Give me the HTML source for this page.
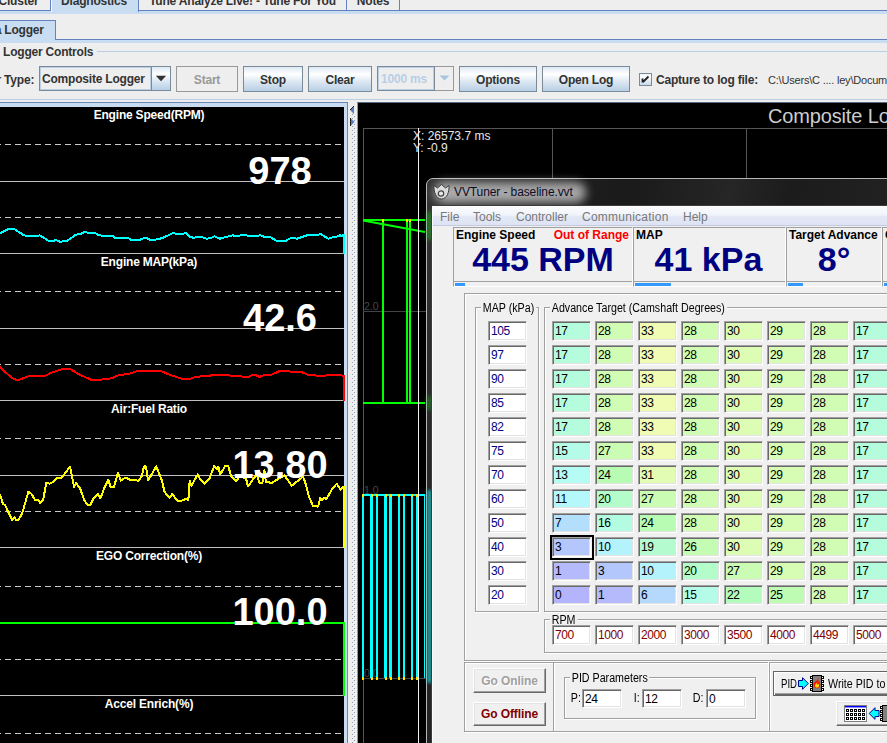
<!DOCTYPE html>
<html><head><meta charset="utf-8"><title>VVTuner</title>
<style>
html,body{margin:0;padding:0}
body{width:887px;height:743px;overflow:hidden;position:relative;background:#eeeeee;font-family:"Liberation Sans",sans-serif;font-size:12px;color:#333}
.a{position:absolute;box-sizing:border-box}
.jb{font-weight:bold;font-size:12px;letter-spacing:-0.2px;white-space:nowrap;color:#333}
.btn{border:1px solid #7a8a99;background:linear-gradient(#dde8f3 0%,#ffffff 30%,#dde8f3 60%,#b8cfe5 100%);text-align:center;line-height:26px;height:26px;top:66px}
.tab{border:1px solid #6382bf;border-top:none;background:#eee;top:-10px;height:21px;text-align:center}
.ttl{color:#fff;font-weight:bold;font-size:12px;letter-spacing:-0.2px;white-space:nowrap;text-align:center;left:49px;width:200px}
.big{color:#fff;font-weight:bold;font-size:38px;white-space:nowrap;text-align:center;left:180px;width:200px;line-height:38px}
.w{font-size:12px;color:#000;white-space:nowrap}
.nr{transform:scaleX(0.89);transform-origin:0 0;white-space:nowrap;color:#000;font-size:12px;line-height:14px;background:#f0f0f0;padding:0 2px}
.in{border:1px solid;border-color:#a0a0a0 #fff #fff #a0a0a0;box-shadow:inset 1px 1px 0 #696969,inset -1px -1px 0 #e3e3e3;background:#fff;height:20px;line-height:19px;padding-left:2px;font-size:12px;letter-spacing:-0.4px;white-space:nowrap;overflow:hidden}
.c{width:37px}
.grp{border:1px solid #a0a0a0;box-shadow:1px 1px 0 #fff, inset 1px 1px 0 #fff}
.pnl{border:1px solid #a0a0a0;box-shadow:1px 1px 0 #fff, inset 1px 1px 0 #fff}
.wb{border:1px solid;border-color:#fff #696969 #696969 #fff;box-shadow:inset -1px -1px 0 #a0a0a0, inset 1px 1px 0 #e3e3e3;background:#f0f0f0}
.g{border:1px solid;border-color:#a0a0a0 #fff #fff #a0a0a0;top:227px;height:60px}
.gl{font-weight:bold;font-size:12px;color:#000;white-space:nowrap;top:0px;line-height:14px}
.gv{font-weight:bold;font-size:34px;color:#000080;white-space:nowrap;text-align:center;left:0;right:0;top:12px;line-height:38px}
.mn{top:4px;color:#787878;font-size:12px;white-space:nowrap;line-height:14px}
</style></head><body>

<div class="a" style="left:0;top:10px;width:887px;height:1px;background:#6382bf"></div>
<div class="a" style="left:0;top:11px;width:887px;height:3px;background:#c8ddf2"></div>
<div class="a tab jb" style="left:-30px;width:81px"><span style="position:absolute;left:16px;right:0;top:4px;line-height:14px">Cluster</span></div>
<div class="a tab jb" style="left:51px;width:88px;background:#c8ddf2;height:22px;border-bottom:none;border-left-color:#f4f8fc"><span style="position:absolute;left:0;right:2px;top:4px;line-height:14px">Diagnostics</span></div>
<div class="a tab jb" style="left:138px;width:209px"><span style="position:absolute;left:0;right:0;top:4px;line-height:14px">Tune Analyze Live! - Tune For You</span></div>
<div class="a tab jb" style="left:346px;width:54px"><span style="position:absolute;left:0;right:0;top:4px;line-height:14px">Notes</span></div>
<div class="a" style="left:0;top:39px;width:887px;height:1px;background:#6382bf"></div>
<div class="a" style="left:0;top:40px;width:887px;height:3px;background:#c8ddf2"></div>
<div class="a jb" style="left:-20px;top:20px;width:76px;height:20px;border:1px solid #6382bf;border-bottom:none;background:#c8ddf2;line-height:19px"><span style="position:absolute;left:-5px;top:0">Data Logger</span></div>
<div class="a" style="left:0;top:51px;width:887px;height:1px;background:#b8cfe5"></div>
<div class="a jb" style="left:-1px;top:45px;background:#eee;padding:0 4px 0 4px;line-height:15px">Logger Controls</div>
<div class="a" style="left:0;top:99px;width:887px;height:1px;background:#b8cfe5"></div>
<div class="a jb" style="left:-10px;top:73px;line-height:15px">er Type:</div>
<div class="a" style="left:39px;top:66px;width:132px;height:25px;border:1px solid #7a8a99;background:linear-gradient(#dde8f3 0%,#ffffff 30%,#dde8f3 60%,#b8cfe5 100%)"></div>
<div class="a" style="left:40px;top:67px;width:111px;height:23px;border:1px solid #b8cfe5;background:#eee"></div>
<div class="a jb" style="left:42px;top:72px;line-height:15px">Composite Logger</div>
<div class="a" style="left:151px;top:67px;width:1px;height:23px;background:#7a8a99"></div>
<svg class="a" style="left:155px;top:75px" width="12" height="7"><path d="M0.800 0.800h10.400l-5.200 5.400z" fill="#333"/></svg>
<div class="a jb" style="left:176px;top:66px;width:62px;height:26px;border:1px solid #999;text-align:center;line-height:26px;color:#999">Start</div>
<div class="a jb btn" style="left:243px;width:60px">Stop</div>
<div class="a jb btn" style="left:308px;width:64px">Clear</div>
<div class="a" style="left:434px;top:66px;width:20px;height:25px;border:1px solid #999;border-left:none"></div>
<div class="a" style="left:377px;top:66px;width:58px;height:25px;border:1px solid #7a8a99;box-shadow:inset 0 0 0 1px #b8cfe5"></div>
<div class="a jb" style="left:381px;top:72px;line-height:15px;color:#b8cfe5">1000 ms</div>
<svg class="a" style="left:439px;top:75px" width="12" height="7"><path d="M0.5 0.5h10l-5 5z" fill="#a9c4e0"/></svg>
<div class="a jb btn" style="left:459px;width:78px">Options</div>
<div class="a jb btn" style="left:542px;width:88px">Open Log</div>
<div class="a" style="left:639px;top:73px;width:13px;height:13px;border:1px solid #7a8a99;background:linear-gradient(#eef3f9,#fff 25%,#c6d8ec)"></div>
<svg class="a" style="left:639px;top:73px" width="13" height="13"><path d="M3.5 5.500v4M4 9l5.500-5.500" stroke="#222" stroke-width="1.800" fill="none"/></svg>
<div class="a jb" style="left:656px;top:73px;line-height:15px">Capture to log file:</div>
<div class="a" style="left:768px;top:73px;line-height:14px;font-size:11px;letter-spacing:-0.2px;white-space:nowrap;color:#333">C:\Users\C .... ley\Documents\TunerStudioProjects</div>
<div class="a" style="left:-5px;top:102px;width:353px;height:700px;border:1px solid #6a86b4;background:#c8ddf2"></div>
<div class="a" style="left:0;top:107px;width:344px;height:640px;background:#000"></div>
<svg class="a" style="left:0;top:0" width="345" height="743" viewBox="0 0 345 743" shape-rendering="crispEdges"><line x1="-5" y1="144.5" x2="344" y2="144.5" stroke="#c8c8c8" stroke-width="1" stroke-dasharray="6 4"/><line x1="0" y1="181.5" x2="344" y2="181.5" stroke="#c0c0c0" stroke-width="1"/><line x1="-5" y1="217.5" x2="344" y2="217.5" stroke="#c8c8c8" stroke-width="1" stroke-dasharray="6 4"/><line x1="0" y1="253.5" x2="344" y2="253.5" stroke="#c0c0c0" stroke-width="1"/><line x1="-5" y1="291.5" x2="344" y2="291.5" stroke="#c8c8c8" stroke-width="1" stroke-dasharray="6 4"/><line x1="0" y1="328.5" x2="344" y2="328.5" stroke="#c0c0c0" stroke-width="1"/><line x1="-5" y1="364.5" x2="344" y2="364.5" stroke="#c8c8c8" stroke-width="1" stroke-dasharray="6 4"/><line x1="0" y1="400.5" x2="344" y2="400.5" stroke="#c0c0c0" stroke-width="1"/><line x1="-5" y1="438.5" x2="344" y2="438.5" stroke="#c8c8c8" stroke-width="1" stroke-dasharray="6 4"/><line x1="0" y1="475.5" x2="344" y2="475.5" stroke="#c0c0c0" stroke-width="1"/><line x1="-5" y1="511.5" x2="344" y2="511.5" stroke="#c8c8c8" stroke-width="1" stroke-dasharray="6 4"/><line x1="0" y1="547.5" x2="344" y2="547.5" stroke="#c0c0c0" stroke-width="1"/><line x1="-5" y1="586.5" x2="344" y2="586.5" stroke="#c8c8c8" stroke-width="1" stroke-dasharray="6 4"/><line x1="-5" y1="659.5" x2="344" y2="659.5" stroke="#c8c8c8" stroke-width="1" stroke-dasharray="6 4"/><line x1="0" y1="695.5" x2="344" y2="695.5" stroke="#c0c0c0" stroke-width="1"/><line x1="-5" y1="733.5" x2="344" y2="733.5" stroke="#c8c8c8" stroke-width="1" stroke-dasharray="6 4"/><line x1="0" y1="770.5" x2="344" y2="770.5" stroke="#c0c0c0" stroke-width="1"/><line x1="-5" y1="800.5" x2="344" y2="800.5" stroke="#c8c8c8" stroke-width="1" stroke-dasharray="6 4"/><line x1="0" y1="840.5" x2="344" y2="840.5" stroke="#c0c0c0" stroke-width="1"/><polyline points="0.0,233.3 9.0,228.8 14.0,228.8 24.0,235.3 27.4,236.3 37.5,236.3 39.6,235.3 48.7,240.8 53.8,240.8 55.8,239.8 59.9,241.8 67.0,240.8 76.0,234.7 81.0,233.9 85.0,231.8 88.0,232.9 95.0,232.9 98.0,234.7 101.5,235.7 112.6,235.7 114.6,237.7 127.8,237.7 132.0,240.4 139.0,240.4 142.0,238.7 146.0,237.7 150.0,239.8 158.0,239.4 164.0,237.3 172.5,233.3 180.0,233.9 186.2,233.3 190.3,236.9 193.3,237.7 200.4,236.7 206.5,238.7 210.6,238.3 214.6,236.3 219.7,238.7 228.8,236.3 232.9,235.3 236.0,236.3 244.0,234.7 248.0,235.9 257.3,235.9 260.3,235.3 265.4,237.3 269.4,236.7 276.5,240.8 285.7,240.8 291.8,237.7 296.8,238.7 309.0,234.7 312.0,235.3 321.2,234.3 328.3,238.7 332.3,237.3 338.4,236.3 340.5,234.9 341.5,236.3 343.0,234.7 344,235 344,254" fill="none" stroke="#00ffff" stroke-width="2" stroke-linejoin="round"/><polyline points="0.0,366.8 4.0,371.2 14.2,379.4 19.3,379.8 28.4,376.3 44.6,376.3 50.7,372.9 63.0,368.8 70.0,368.8 79.0,374.3 91.3,379.8 99.4,379.8 111.6,378.3 119.7,374.7 127.8,374.3 139.0,370.6 160.3,370.6 168.4,374.3 174.5,376.3 176.0,376.9 182.2,378.9 189.3,378.9 196.4,376.9 206.5,375.9 218.7,374.7 228.8,374.7 230.9,375.9 240.0,375.9 243.0,376.9 249.0,376.9 251.2,375.3 256.2,375.3 259.3,376.9 265.4,374.7 271.5,374.7 280.6,370.6 288.7,370.6 290.7,371.8 300.9,371.8 308.0,374.9 315.0,374.9 317.0,375.9 325.2,375.9 327.3,374.7 340.5,374.7 343.0,375.9 344,376 344,401" fill="none" stroke="#ff0000" stroke-width="2" stroke-linejoin="round"/><polyline points="0.0,494.4 3.0,504.0 5.0,505.0 12.2,520.2 14.6,517.1 16.2,520.2 18.7,519.7 22.3,513.0 28.4,491.7 31.5,493.8 35.0,499.9 38.6,500.5 40.0,502.9 43.2,499.5 46.3,483.0 49.7,483.6 53.8,481.6 56.8,477.5 61.9,477.5 70.0,466.8 74.0,486.7 76.0,483.0 80.2,488.7 84.2,499.9 87.7,505.3 90.3,505.3 93.8,497.8 97.8,493.8 100.4,498.4 104.5,487.7 108.2,479.6 110.6,486.7 114.0,487.1 118.0,472.5 120.7,480.6 125.8,477.5 130.9,480.2 139.0,480.6 142.0,475.5 144.0,466.4 146.0,466.4 148.1,480.6 156.3,466.4 162.3,481.6 164.4,491.7 169.4,497.8 172.4,493.8 177.1,500.5 181.2,500.9 186.2,498.8 188.3,500.5 189.7,480.6 191.3,485.7 197.8,474.5 200.4,479.6 204.5,483.6 209.6,478.6 214.2,466.0 217.0,469.4 218.3,466.8 220.3,474.5 225.2,466.0 228.2,466.0 230.9,475.5 236.0,481.6 239.0,476.9 243.0,477.5 246.0,478.6 248.0,486.3 255.2,476.5 256.2,472.5 259.3,482.6 262.3,483.0 264.4,470.4 265.8,481.6 271.5,483.0 280.6,477.5 284.6,475.5 291.8,485.7 302.9,476.9 305.0,481.6 309.0,496.8 313.0,506.0 318.1,506.6 320.2,497.8 322.2,499.9 324.2,497.8 326.3,499.3 332.3,488.7 336.8,483.6 340.5,489.7 343.0,487.1 344,487 344,548" fill="none" stroke="#ffff00" stroke-width="2" stroke-linejoin="round"/><polyline points="0,623 344,623 344,696" fill="none" stroke="#00ff00" stroke-width="2"/></svg>
<div class="a ttl" style="top:107.5px;line-height:14px">Engine Speed(RPM)</div>
<div class="a big" style="top:151.5px">978</div>
<div class="a ttl" style="top:254.8px;line-height:14px">Engine MAP(kPa)</div>
<div class="a big" style="top:298.8px">42.6</div>
<div class="a ttl" style="top:402.0px;line-height:14px">Air:Fuel Ratio</div>
<div class="a big" style="top:446.0px">13.80</div>
<div class="a ttl" style="top:549.2px;line-height:14px">EGO Correction(%)</div>
<div class="a big" style="top:593.2px">100.0</div>
<div class="a ttl" style="top:696.5px;line-height:14px">Accel Enrich(%)</div>
<div class="a" style="left:348px;top:102px;width:10px;height:641px;background:#eee"></div>
<svg class="a" style="left:352px;top:114px" width="5" height="629" shape-rendering="crispEdges"><defs><pattern id="dp" width="5" height="4" patternUnits="userSpaceOnUse"><rect x="0" y="0" width="1" height="1" fill="#8e9db0"/><rect x="1" y="1" width="1" height="1" fill="#fff"/><rect x="2" y="2" width="1" height="1" fill="#8e9db0"/><rect x="3" y="3" width="1" height="1" fill="#fff"/></pattern></defs><rect width="5" height="629" fill="url(#dp)"/></svg>
<svg class="a" style="left:348px;top:104px" width="10" height="24"><path d="M6 2v8l-4-4z" fill="#5b7bc8"/><path d="M6 2l-4 4" stroke="#222" stroke-width="1" fill="none"/><path d="M2.5 14v8l4-4z" fill="#5b7bc8"/><path d="M2.500 14v8" stroke="#222" stroke-width="1"/></svg>
<div class="a" style="left:357px;top:102px;width:530px;height:641px;background:#000;border-left:1px solid #8c9cb0;border-top:1px solid #5a6a80"></div>
<div class="a" style="left:768px;top:105px;font-size:20px;line-height:22px;color:#cdcdcd;white-space:nowrap;letter-spacing:-0.15px">Composite Logger</div>
<div class="a" style="left:364px;top:301px;font-size:10.5px;line-height:10px;color:#464646;white-space:nowrap">2.0</div>
<div class="a" style="left:364px;top:485px;font-size:10.5px;line-height:10px;color:#464646;white-space:nowrap">1.0</div>
<div class="a" style="left:364px;top:668px;font-size:10.5px;line-height:10px;color:#464646;white-space:nowrap">0.0</div>
<svg class="a" style="left:357px;top:102px" width="530" height="641" viewBox="357 102 530 641" shape-rendering="crispEdges"><path d="M363.5 743V128.5H887" fill="none" stroke="#555" stroke-width="1"/><line x1="552.5" y1="128" x2="552.5" y2="743" stroke="#555"/><line x1="746.5" y1="128" x2="746.5" y2="743" stroke="#555"/><line x1="363" y1="311.5" x2="887" y2="311.5" stroke="#444"/><line x1="363" y1="495.5" x2="887" y2="495.5" stroke="#444"/><line x1="363" y1="678.5" x2="887" y2="678.5" stroke="#444"/><rect x="363" y="219" width="62" height="2" fill="#00ff00"/><rect x="363" y="402" width="62" height="2" fill="#00ff00"/><line x1="363" y1="220.5" x2="425" y2="232" stroke="#00ff00" stroke-width="2" shape-rendering="auto"/><rect x="382" y="220" width="2" height="183" fill="#00ff00"/><rect x="382" y="219" width="2" height="3" fill="#ffe800"/><rect x="406" y="220" width="2" height="183" fill="#00ff00"/><rect x="406" y="219" width="2" height="3" fill="#ffe800"/><rect x="409" y="220" width="2" height="183" fill="#00ff00"/><rect x="409" y="219" width="2" height="3" fill="#ffe800"/><rect x="362" y="494" width="63" height="2" fill="#00ffff"/><rect x="362" y="495" width="2" height="183" fill="#00ffff"/><rect x="362" y="494" width="2" height="3" fill="#ffe800"/><rect x="362" y="677" width="2" height="3" fill="#ffe800"/><rect x="370" y="495" width="3" height="183" fill="#00ffff"/><rect x="371" y="494" width="2" height="3" fill="#ffe800"/><rect x="371" y="677" width="2" height="3" fill="#ffe800"/><rect x="376" y="495" width="2" height="183" fill="#00ffff"/><rect x="376" y="494" width="2" height="3" fill="#ffe800"/><rect x="376" y="677" width="2" height="3" fill="#ffe800"/><rect x="384" y="495" width="3" height="183" fill="#00ffff"/><rect x="385" y="494" width="2" height="3" fill="#ffe800"/><rect x="385" y="677" width="2" height="3" fill="#ffe800"/><rect x="389" y="495" width="3" height="183" fill="#00ffff"/><rect x="390" y="494" width="2" height="3" fill="#ffe800"/><rect x="390" y="677" width="2" height="3" fill="#ffe800"/><rect x="398" y="495" width="2" height="183" fill="#00ffff"/><rect x="398" y="494" width="2" height="3" fill="#ffe800"/><rect x="398" y="677" width="2" height="3" fill="#ffe800"/><rect x="403" y="495" width="2" height="183" fill="#00ffff"/><rect x="403" y="494" width="2" height="3" fill="#ffe800"/><rect x="403" y="677" width="2" height="3" fill="#ffe800"/><rect x="411" y="495" width="2" height="183" fill="#00ffff"/><rect x="411" y="494" width="2" height="3" fill="#ffe800"/><rect x="411" y="677" width="2" height="3" fill="#ffe800"/><rect x="416" y="495" width="2" height="183" fill="#00ffff"/><rect x="416" y="494" width="2" height="3" fill="#ffe800"/><rect x="416" y="677" width="2" height="3" fill="#ffe800"/><rect x="424" y="495" width="1" height="183" fill="#00ffff"/><line x1="418.5" y1="128" x2="418.5" y2="743" stroke="#f0f0f0"/></svg>
<div class="a" style="left:413px;top:130px;font-size:12px;line-height:12px;color:#e8e8e8;white-space:nowrap">X: 26573.7 ms<br>Y: -0.9</div>
<div class="a" style="left:426px;top:178px;width:480px;height:600px;border:1px solid #b4b8bc;border-radius:7px 0 0 0;background:linear-gradient(100deg,#343434 0,#262626 60px,#1a1a1a 200px,#262626 300px,#1c1c1c 360px,#222 480px)"></div>
<div class="a" style="left:427px;top:212px;width:5px;height:28px;background:rgba(40,200,40,0.55);filter:blur(2px)"></div>
<div class="a" style="left:427px;top:396px;width:5px;height:14px;background:rgba(40,200,40,0.45);filter:blur(2px)"></div>
<div class="a" style="left:427px;top:490px;width:5px;height:193px;background:rgba(30,200,200,0.7);filter:blur(1.5px)"></div>
<div class="a" style="left:434px;top:182px;width:152px;height:21px;border-radius:10px;background:rgba(255,255,255,0.6);filter:blur(5px)"></div>
<svg class="a" style="left:433px;top:184px" width="17" height="16" viewBox="0 0 17 16"><path d="M1 1.500l3.500 2.500L8.500 0.500l4 3.500L16 1.500c0.500 6-2 13.500-7.500 13.500S0.500 7.500 1 1.500z" fill="#dcdcdc" stroke="#3a3a3a" stroke-width="1"/><circle cx="8" cy="9.500" r="2.700" fill="#e8e8e8" stroke="#444" stroke-width="1.200"/></svg>
<div class="a" style="left:454px;top:185px;font-size:12px;line-height:14px;color:#0c0c28;white-space:nowrap;letter-spacing:-0.1px">VVTuner - baseline.vvt</div>
<div class="a" style="left:431px;top:205px;width:470px;height:560px;border:1px solid #3c3c3c;border-radius:2px 0 0 0"></div>
<div class="a" style="left:432px;top:206px;width:470px;height:560px;background:#f0f0f0;border:1px solid #fdfdfd"></div>
<div class="a" style="left:433px;top:207px;width:460px;height:19px;background:linear-gradient(#fafbfd 0,#f0f3fa 45%,#e2e7f5 55%,#dde3f3 100%);border-bottom:1px solid #c4cbe0"></div>
<div class="a mn" style="left:440px;top:210px">File</div>
<div class="a mn" style="left:473px;top:210px">Tools</div>
<div class="a mn" style="left:516px;top:210px">Controller</div>
<div class="a mn" style="left:582px;top:210px;letter-spacing:0.25px">Communication</div>
<div class="a mn" style="left:683px;top:210px">Help</div>
<div class="a g" style="left:453px;width:180px"><div class="a gl" style="left:2px">Engine Speed</div><div class="a gl" style="right:3px;color:#ff0000">Out of Range</div><div class="a gv" style="left:0px">445 RPM</div><div class="a" style="left:0;right:0;top:53px;height:1px;background:#a0a0a0"></div><div class="a" style="left:1px;top:55px;width:10px;height:3px;background:#3399ff"></div></div>
<div class="a g" style="left:633px;width:153px"><div class="a gl" style="left:2px">MAP</div><div class="a gv" style="left:-2px">41 kPa</div><div class="a" style="left:0;right:0;top:53px;height:1px;background:#a0a0a0"></div><div class="a" style="left:1px;top:55px;width:36px;height:3px;background:#3399ff"></div></div>
<div class="a g" style="left:786px;width:96px"><div class="a gl" style="left:2px">Target Advance</div><div class="a gv" style="left:0px">8°</div><div class="a" style="left:0;right:0;top:53px;height:1px;background:#a0a0a0"></div><div class="a" style="left:1px;top:55px;width:15px;height:3px;background:#3399ff"></div></div>
<div class="a g" style="left:882px;width:96px"><div class="a gl" style="left:2px">Cam Advance</div><div class="a gv" style="left:0px">8°</div><div class="a" style="left:0;right:0;top:53px;height:1px;background:#a0a0a0"></div><div class="a" style="left:1px;top:55px;width:15px;height:3px;background:#3399ff"></div></div>
<div class="a pnl" style="left:464px;top:293px;width:480px;height:368px"></div>
<div class="a pnl" style="left:464px;top:662px;width:500px;height:70px"></div>
<div class="a" style="left:553px;top:663px;width:2px;height:68px;border-left:1px solid #a0a0a0;background:#fff"></div>
<div class="a" style="left:768px;top:662px;width:3px;height:69px;border-left:1px solid #fff;border-right:1px solid #fff;background:#a0a0a0"></div>
<div class="a" style="left:770px;top:662px;width:1px;height:1px;background:#a0a0a0"></div>
<div class="a grp" style="left:475px;top:307px;width:64px;height:305px"></div>
<div class="a nr" style="left:481px;top:301px">MAP (kPa)</div>
<div class="a grp" style="left:544px;top:307px;width:400px;height:305px"></div>
<div class="a nr" style="left:550px;top:301px">Advance Target (Camshaft Degrees)</div>
<div class="a grp" style="left:544px;top:619px;width:400px;height:34px"></div>
<div class="a nr" style="left:550px;top:613px">RPM</div>
<div class="a in" style="left:488px;top:321px;width:39px;color:#000080">105</div>
<div class="a in c" style="left:552px;top:321px;width:39px;background:#b4fcdb;color:#000">17</div>
<div class="a in c" style="left:595px;top:321px;width:39px;background:#d1fcb4;color:#000">28</div>
<div class="a in c" style="left:638px;top:321px;width:39px;background:#f0fcb4;color:#000">33</div>
<div class="a in c" style="left:681px;top:321px;width:39px;background:#d1fcb4;color:#000">28</div>
<div class="a in c" style="left:724px;top:321px;width:39px;background:#ddfcb4;color:#000">30</div>
<div class="a in c" style="left:767px;top:321px;width:39px;background:#d7fcb4;color:#000">29</div>
<div class="a in c" style="left:810px;top:321px;width:39px;background:#d1fcb4;color:#000">28</div>
<div class="a in c" style="left:853px;top:321px;width:39px;background:#b4fcdb;color:#000">17</div>
<div class="a in" style="left:488px;top:345px;width:39px;color:#000080">97</div>
<div class="a in c" style="left:552px;top:345px;width:39px;background:#b4fcdb;color:#000">17</div>
<div class="a in c" style="left:595px;top:345px;width:39px;background:#d1fcb4;color:#000">28</div>
<div class="a in c" style="left:638px;top:345px;width:39px;background:#f0fcb4;color:#000">33</div>
<div class="a in c" style="left:681px;top:345px;width:39px;background:#d1fcb4;color:#000">28</div>
<div class="a in c" style="left:724px;top:345px;width:39px;background:#ddfcb4;color:#000">30</div>
<div class="a in c" style="left:767px;top:345px;width:39px;background:#d7fcb4;color:#000">29</div>
<div class="a in c" style="left:810px;top:345px;width:39px;background:#d1fcb4;color:#000">28</div>
<div class="a in c" style="left:853px;top:345px;width:39px;background:#b4fcdb;color:#000">17</div>
<div class="a in" style="left:488px;top:369px;width:39px;color:#000080">90</div>
<div class="a in c" style="left:552px;top:369px;width:39px;background:#b4fcdb;color:#000">17</div>
<div class="a in c" style="left:595px;top:369px;width:39px;background:#d1fcb4;color:#000">28</div>
<div class="a in c" style="left:638px;top:369px;width:39px;background:#f0fcb4;color:#000">33</div>
<div class="a in c" style="left:681px;top:369px;width:39px;background:#d1fcb4;color:#000">28</div>
<div class="a in c" style="left:724px;top:369px;width:39px;background:#ddfcb4;color:#000">30</div>
<div class="a in c" style="left:767px;top:369px;width:39px;background:#d7fcb4;color:#000">29</div>
<div class="a in c" style="left:810px;top:369px;width:39px;background:#d1fcb4;color:#000">28</div>
<div class="a in c" style="left:853px;top:369px;width:39px;background:#b4fcdb;color:#000">17</div>
<div class="a in" style="left:488px;top:393px;width:39px;color:#000080">85</div>
<div class="a in c" style="left:552px;top:393px;width:39px;background:#b4fcdb;color:#000">17</div>
<div class="a in c" style="left:595px;top:393px;width:39px;background:#d1fcb4;color:#000">28</div>
<div class="a in c" style="left:638px;top:393px;width:39px;background:#f0fcb4;color:#000">33</div>
<div class="a in c" style="left:681px;top:393px;width:39px;background:#d1fcb4;color:#000">28</div>
<div class="a in c" style="left:724px;top:393px;width:39px;background:#ddfcb4;color:#000">30</div>
<div class="a in c" style="left:767px;top:393px;width:39px;background:#d7fcb4;color:#000">29</div>
<div class="a in c" style="left:810px;top:393px;width:39px;background:#d1fcb4;color:#000">28</div>
<div class="a in c" style="left:853px;top:393px;width:39px;background:#b4fcdb;color:#000">17</div>
<div class="a in" style="left:488px;top:417px;width:39px;color:#000080">82</div>
<div class="a in c" style="left:552px;top:417px;width:39px;background:#b4fcdb;color:#000">17</div>
<div class="a in c" style="left:595px;top:417px;width:39px;background:#d1fcb4;color:#000">28</div>
<div class="a in c" style="left:638px;top:417px;width:39px;background:#f0fcb4;color:#000">33</div>
<div class="a in c" style="left:681px;top:417px;width:39px;background:#d1fcb4;color:#000">28</div>
<div class="a in c" style="left:724px;top:417px;width:39px;background:#ddfcb4;color:#000">30</div>
<div class="a in c" style="left:767px;top:417px;width:39px;background:#d7fcb4;color:#000">29</div>
<div class="a in c" style="left:810px;top:417px;width:39px;background:#d1fcb4;color:#000">28</div>
<div class="a in c" style="left:853px;top:417px;width:39px;background:#b4fcdb;color:#000">17</div>
<div class="a in" style="left:488px;top:441px;width:39px;color:#000080">75</div>
<div class="a in c" style="left:552px;top:441px;width:39px;background:#b4fce7;color:#000">15</div>
<div class="a in c" style="left:595px;top:441px;width:39px;background:#cbfcb4;color:#000">27</div>
<div class="a in c" style="left:638px;top:441px;width:39px;background:#f0fcb4;color:#000">33</div>
<div class="a in c" style="left:681px;top:441px;width:39px;background:#d1fcb4;color:#000">28</div>
<div class="a in c" style="left:724px;top:441px;width:39px;background:#ddfcb4;color:#000">30</div>
<div class="a in c" style="left:767px;top:441px;width:39px;background:#d7fcb4;color:#000">29</div>
<div class="a in c" style="left:810px;top:441px;width:39px;background:#d1fcb4;color:#000">28</div>
<div class="a in c" style="left:853px;top:441px;width:39px;background:#b4fcdb;color:#000">17</div>
<div class="a in" style="left:488px;top:465px;width:39px;color:#000080">70</div>
<div class="a in c" style="left:552px;top:465px;width:39px;background:#b4fcf4;color:#000">13</div>
<div class="a in c" style="left:595px;top:465px;width:39px;background:#b8fcb4;color:#000">24</div>
<div class="a in c" style="left:638px;top:465px;width:39px;background:#e3fcb4;color:#000">31</div>
<div class="a in c" style="left:681px;top:465px;width:39px;background:#d1fcb4;color:#000">28</div>
<div class="a in c" style="left:724px;top:465px;width:39px;background:#ddfcb4;color:#000">30</div>
<div class="a in c" style="left:767px;top:465px;width:39px;background:#d7fcb4;color:#000">29</div>
<div class="a in c" style="left:810px;top:465px;width:39px;background:#d1fcb4;color:#000">28</div>
<div class="a in c" style="left:853px;top:465px;width:39px;background:#b4fcdb;color:#000">17</div>
<div class="a in" style="left:488px;top:489px;width:39px;color:#000080">60</div>
<div class="a in c" style="left:552px;top:489px;width:39px;background:#b4f8fc;color:#000">11</div>
<div class="a in c" style="left:595px;top:489px;width:39px;background:#b4fcc9;color:#000">20</div>
<div class="a in c" style="left:638px;top:489px;width:39px;background:#cbfcb4;color:#000">27</div>
<div class="a in c" style="left:681px;top:489px;width:39px;background:#d1fcb4;color:#000">28</div>
<div class="a in c" style="left:724px;top:489px;width:39px;background:#ddfcb4;color:#000">30</div>
<div class="a in c" style="left:767px;top:489px;width:39px;background:#d7fcb4;color:#000">29</div>
<div class="a in c" style="left:810px;top:489px;width:39px;background:#d1fcb4;color:#000">28</div>
<div class="a in c" style="left:853px;top:489px;width:39px;background:#b4fcdb;color:#000">17</div>
<div class="a in" style="left:488px;top:513px;width:39px;color:#000080">50</div>
<div class="a in c" style="left:552px;top:513px;width:39px;background:#b4dffc;color:#000">7</div>
<div class="a in c" style="left:595px;top:513px;width:39px;background:#b4fce1;color:#000">16</div>
<div class="a in c" style="left:638px;top:513px;width:39px;background:#b8fcb4;color:#000">24</div>
<div class="a in c" style="left:681px;top:513px;width:39px;background:#d1fcb4;color:#000">28</div>
<div class="a in c" style="left:724px;top:513px;width:39px;background:#ddfcb4;color:#000">30</div>
<div class="a in c" style="left:767px;top:513px;width:39px;background:#d7fcb4;color:#000">29</div>
<div class="a in c" style="left:810px;top:513px;width:39px;background:#d1fcb4;color:#000">28</div>
<div class="a in c" style="left:853px;top:513px;width:39px;background:#b4fcdb;color:#000">17</div>
<div class="a in" style="left:488px;top:537px;width:39px;color:#000080">40</div>
<div class="a in c" style="left:552px;top:537px;width:39px;background:#b4c7fc;color:#000">3</div>
<div class="a in c" style="left:595px;top:537px;width:39px;background:#b4f2fc;color:#000">10</div>
<div class="a in c" style="left:638px;top:537px;width:39px;background:#b4fccf;color:#000">19</div>
<div class="a in c" style="left:681px;top:537px;width:39px;background:#c4fcb4;color:#000">26</div>
<div class="a in c" style="left:724px;top:537px;width:39px;background:#ddfcb4;color:#000">30</div>
<div class="a in c" style="left:767px;top:537px;width:39px;background:#d7fcb4;color:#000">29</div>
<div class="a in c" style="left:810px;top:537px;width:39px;background:#d1fcb4;color:#000">28</div>
<div class="a in c" style="left:853px;top:537px;width:39px;background:#b4fcdb;color:#000">17</div>
<div class="a in" style="left:488px;top:561px;width:39px;color:#000080">30</div>
<div class="a in c" style="left:552px;top:561px;width:39px;background:#b4bafc;color:#000">1</div>
<div class="a in c" style="left:595px;top:561px;width:39px;background:#b4c7fc;color:#000">3</div>
<div class="a in c" style="left:638px;top:561px;width:39px;background:#b4f2fc;color:#000">10</div>
<div class="a in c" style="left:681px;top:561px;width:39px;background:#b4fcc9;color:#000">20</div>
<div class="a in c" style="left:724px;top:561px;width:39px;background:#cbfcb4;color:#000">27</div>
<div class="a in c" style="left:767px;top:561px;width:39px;background:#d7fcb4;color:#000">29</div>
<div class="a in c" style="left:810px;top:561px;width:39px;background:#d1fcb4;color:#000">28</div>
<div class="a in c" style="left:853px;top:561px;width:39px;background:#b4fcdb;color:#000">17</div>
<div class="a in" style="left:488px;top:585px;width:39px;color:#000080">20</div>
<div class="a in c" style="left:552px;top:585px;width:39px;background:#b4b4fc;color:#000">0</div>
<div class="a in c" style="left:595px;top:585px;width:39px;background:#b4bafc;color:#000">1</div>
<div class="a in c" style="left:638px;top:585px;width:39px;background:#b4d9fc;color:#000">6</div>
<div class="a in c" style="left:681px;top:585px;width:39px;background:#b4fce7;color:#000">15</div>
<div class="a in c" style="left:724px;top:585px;width:39px;background:#b4fcbc;color:#000">22</div>
<div class="a in c" style="left:767px;top:585px;width:39px;background:#befcb4;color:#000">25</div>
<div class="a in c" style="left:810px;top:585px;width:39px;background:#d1fcb4;color:#000">28</div>
<div class="a in c" style="left:853px;top:585px;width:39px;background:#b4fcdb;color:#000">17</div>
<div class="a" style="left:550px;top:535px;width:44px;height:25px;border:2px solid #000"></div>
<div class="a in" style="left:552px;top:625px;width:39px;color:#800000">700</div>
<div class="a in" style="left:595px;top:625px;width:39px;color:#800000">1000</div>
<div class="a in" style="left:638px;top:625px;width:39px;color:#800000">2000</div>
<div class="a in" style="left:681px;top:625px;width:39px;color:#800000">3000</div>
<div class="a in" style="left:724px;top:625px;width:39px;color:#800000">3500</div>
<div class="a in" style="left:767px;top:625px;width:39px;color:#800000">4000</div>
<div class="a in" style="left:810px;top:625px;width:39px;color:#800000">4499</div>
<div class="a in" style="left:853px;top:625px;width:39px;color:#800000">5000</div>
<div class="a wb" style="left:473px;top:668px;width:73px;height:25px;font-weight:bold;font-size:12px;text-align:center;line-height:24px;color:#a0a0a0;text-shadow:1px 1px 0 #fff;white-space:nowrap;letter-spacing:-0.1px">Go Online</div>
<div class="a wb" style="left:473px;top:702px;width:73px;height:24px;font-weight:bold;font-size:12px;text-align:center;line-height:23px;color:#800000;white-space:nowrap;letter-spacing:-0.1px">Go Offline</div>
<div class="a grp" style="left:564px;top:677px;width:192px;height:42px"></div>
<div class="a nr" style="left:570px;top:671px">PID Parameters</div>
<div class="a nr" style="left:569px;top:691px;background:none">P:</div>
<div class="a in" style="left:582px;top:689px;width:40px;height:19px;line-height:18px;color:#000">24</div>
<div class="a nr" style="left:632px;top:691px;background:none">I:</div>
<div class="a in" style="left:642px;top:689px;width:40px;height:19px;line-height:18px;color:#000">12</div>
<div class="a nr" style="left:691px;top:691px;background:none">D:</div>
<div class="a in" style="left:706px;top:689px;width:40px;height:19px;line-height:18px;color:#000">0</div>
<div class="a" style="left:773px;top:671px;width:140px;height:25px;border:1px solid #646464;background:#f0f0f0;box-shadow:inset 1px 1px 0 #fff,inset -1px -1px 0 #696969,inset -2px -2px 0 #a0a0a0"></div>
<div class="a nr" style="left:781px;top:677px;background:none;padding:0;transform:scaleX(0.8)">PID</div>
<svg class="a" style="left:798px;top:677px" width="11" height="13" viewBox="0 0 11 13"><path d="M0.500 3.500H4.500V0.700L10.300 6.500L4.500 12.300V9.500H0.500z" fill="#00ffff" stroke="#000090" stroke-width="1"/></svg>
<svg class="a" style="left:810px;top:675px" width="14" height="17" viewBox="0 0 14 17" shape-rendering="crispEdges"><rect x="0" y="1" width="3" height="3" fill="#000"/><rect x="1" y="2" width="1" height="1" fill="#fff"/><rect x="11" y="1" width="3" height="3" fill="#000"/><rect x="12" y="2" width="1" height="1" fill="#fff"/><rect x="0" y="5" width="3" height="3" fill="#000"/><rect x="1" y="6" width="1" height="1" fill="#fff"/><rect x="11" y="5" width="3" height="3" fill="#000"/><rect x="12" y="6" width="1" height="1" fill="#fff"/><rect x="0" y="9" width="3" height="3" fill="#000"/><rect x="1" y="10" width="1" height="1" fill="#fff"/><rect x="11" y="9" width="3" height="3" fill="#000"/><rect x="12" y="10" width="1" height="1" fill="#fff"/><rect x="0" y="13" width="3" height="3" fill="#000"/><rect x="1" y="14" width="1" height="1" fill="#fff"/><rect x="11" y="13" width="3" height="3" fill="#000"/><rect x="12" y="14" width="1" height="1" fill="#fff"/><rect x="2" y="0" width="10" height="17" fill="#000"/><rect x="3" y="1" width="8" height="15" fill="#808080"/><g shape-rendering="auto" transform="translate(-1.800,0.300) scale(1.080,1)"><path d="M9.500 2.500C9.500 5 5 6 5 9.500C5 11.500 6.200 13 8 13C10 13 11.200 11.500 11.200 9.800C11.200 8 10.300 7.200 10.500 5.200C9.500 5.800 9.200 6.500 9 7.300C8.800 5.800 10 4.500 9.500 2.500z" fill="#ff1800"/><path d="M8 7.500C7 8.500 6.300 9.300 6.300 10.500C6.300 11.600 7 12.300 8 12.300C9.200 12.300 10 11.500 10 10.500C10 9.600 9.600 9.200 9.300 8.300C9.200 9.200 8.800 9.600 8.300 9.700C8.300 9 8.300 8.300 8 7.500z" fill="#ffe400"/></g></svg>
<div class="a nr" style="left:828px;top:677px;background:none;padding:0">Write PID to Controller</div>
<div class="a wb" style="left:836px;top:701px;width:100px;height:25px"></div>
<svg class="a" style="left:844px;top:705px" width="23" height="17" viewBox="0 0 23 17" shape-rendering="crispEdges"><rect x="0" y="0" width="23" height="17" fill="#808080"/><rect x="1" y="1" width="21" height="15" fill="#fff"/><rect x="1" y="1" width="21" height="1" fill="#0000ff"/><rect x="1" y="2" width="21" height="1" fill="#8c8cff"/><rect x="2" y="4" width="3" height="3" fill="#000"/><rect x="3" y="5" width="1" height="1" fill="#fff"/><rect x="6" y="4" width="3" height="3" fill="#000"/><rect x="7" y="5" width="1" height="1" fill="#fff"/><rect x="10" y="4" width="3" height="3" fill="#000"/><rect x="11" y="5" width="1" height="1" fill="#fff"/><rect x="14" y="4" width="3" height="3" fill="#000"/><rect x="15" y="5" width="1" height="1" fill="#fff"/><rect x="18" y="4" width="3" height="3" fill="#000"/><rect x="19" y="5" width="1" height="1" fill="#fff"/><rect x="2" y="8" width="3" height="3" fill="#000"/><rect x="3" y="9" width="1" height="1" fill="#fff"/><rect x="6" y="8" width="3" height="3" fill="#000"/><rect x="7" y="9" width="1" height="1" fill="#fff"/><rect x="10" y="8" width="3" height="3" fill="#000"/><rect x="11" y="9" width="1" height="1" fill="#fff"/><rect x="14" y="8" width="3" height="3" fill="#000"/><rect x="15" y="9" width="1" height="1" fill="#fff"/><rect x="18" y="8" width="3" height="3" fill="#000"/><rect x="19" y="9" width="1" height="1" fill="#fff"/><rect x="2" y="12" width="3" height="3" fill="#000"/><rect x="3" y="13" width="1" height="1" fill="#fff"/><rect x="6" y="12" width="3" height="3" fill="#000"/><rect x="7" y="13" width="1" height="1" fill="#fff"/><rect x="10" y="12" width="3" height="3" fill="#000"/><rect x="11" y="13" width="1" height="1" fill="#fff"/><rect x="14" y="12" width="3" height="3" fill="#000"/><rect x="15" y="13" width="1" height="1" fill="#fff"/><rect x="18" y="12" width="3" height="3" fill="#000"/><rect x="19" y="13" width="1" height="1" fill="#fff"/></svg>
<svg class="a" style="left:868px;top:707px" width="12" height="13" viewBox="0 0 12 13"><path d="M11 3.500H7V0.700L1.200 6.500L7 12.300V9.500H11z" fill="#00ffff" stroke="#000090" stroke-width="1"/></svg>
<svg class="a" style="left:880px;top:705px" width="14" height="17" viewBox="0 0 14 17" shape-rendering="crispEdges"><rect x="0" y="1" width="3" height="3" fill="#000"/><rect x="1" y="2" width="1" height="1" fill="#fff"/><rect x="11" y="1" width="3" height="3" fill="#000"/><rect x="12" y="2" width="1" height="1" fill="#fff"/><rect x="0" y="5" width="3" height="3" fill="#000"/><rect x="1" y="6" width="1" height="1" fill="#fff"/><rect x="11" y="5" width="3" height="3" fill="#000"/><rect x="12" y="6" width="1" height="1" fill="#fff"/><rect x="0" y="9" width="3" height="3" fill="#000"/><rect x="1" y="10" width="1" height="1" fill="#fff"/><rect x="11" y="9" width="3" height="3" fill="#000"/><rect x="12" y="10" width="1" height="1" fill="#fff"/><rect x="0" y="13" width="3" height="3" fill="#000"/><rect x="1" y="14" width="1" height="1" fill="#fff"/><rect x="11" y="13" width="3" height="3" fill="#000"/><rect x="12" y="14" width="1" height="1" fill="#fff"/><rect x="2" y="0" width="10" height="17" fill="#000"/><rect x="3" y="1" width="8" height="15" fill="#808080"/><g shape-rendering="auto" transform="translate(-1.800,0.300) scale(1.080,1)"></g></svg>
</body></html>
